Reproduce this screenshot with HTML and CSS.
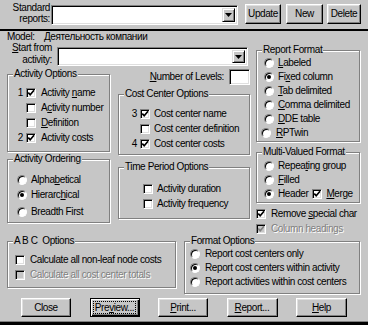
FILE: index.html
```html
<!DOCTYPE html>
<html>
<head>
<meta charset="utf-8">
<link rel="stylesheet" href="styles.css">
</head>
<body>
<div class="top">
  <div class="std-label">Standard<br>reports:</div>
  <div class="combo sunken combo-std">
    <div class="drop"><svg width="7" height="4" viewBox="0 0 7 4"><polygon points="0,0 7,0 3.5,4" fill="#000"/></svg></div>
  </div>
  <button class="btn tbtn b-update">Update</button>
  <button class="btn tbtn b-new">New</button>
  <button class="btn tbtn b-delete">Delete</button>
</div>
<div class="sep"></div>
<div class="main">
  <div class="model"><span class="model-label">Model:</span><span>Деятельность компании</span></div>
  <div class="content">
    <div class="leftpart">
      <div class="start">
        <div class="start-label"><u>S</u>tart from<br>activity:</div>
        <div class="combo sunken combo-start">
          <div class="drop"><svg width="7" height="4" viewBox="0 0 7 4"><polygon points="0,0 7,0 3.5,4" fill="#000"/></svg></div>
        </div>
      </div>
      <div class="cols">
        <div class="col-left">
          <div class="group g-actopt">
            <div class="gt">Activity Options</div>
            <div class="rows rows-actopt">
              <div class="opt"><span class="num">1</span><span class="cb sunken"><svg width="8" height="8" viewBox="0 0 8 8"><path d="M1.2 3.6l2 2.1 3.8-4.4" fill="none" stroke="#000" stroke-width="1.7"/></svg></span><span class="lbl">Activity <u>n</u>ame</span></div>
              <div class="opt"><span class="num"></span><span class="cb sunken"></span><span class="lbl">A<u>c</u>tivity number</span></div>
              <div class="opt"><span class="num"></span><span class="cb sunken"></span><span class="lbl"><u>D</u>efinition</span></div>
              <div class="opt"><span class="num">2</span><span class="cb sunken"><svg width="8" height="8" viewBox="0 0 8 8"><path d="M1.2 3.6l2 2.1 3.8-4.4" fill="none" stroke="#000" stroke-width="1.7"/></svg></span><span class="lbl">Activity costs</span></div>
            </div>
          </div>
          <div class="group g-actord">
            <div class="gt">Activity Ordering</div>
            <div class="rows rows-ord">
              <div class="opt"><span class="rb"></span><span class="lbl">Alpha<u>b</u>etical</span></div>
              <div class="opt"><span class="rb on"></span><span class="lbl">Hierarc<u>h</u>ical</span></div>
              <div class="opt"><span class="rb"></span><span class="lbl">Breadth First</span></div>
            </div>
          </div>
        </div>
        <div class="col-mid">
          <div class="levels"><span><u>N</u>umber of Levels:</span><span class="edit sunken"></span></div>
          <div class="group g-cost">
            <div class="gt">Cost Center Options</div>
            <div class="rows rows-cost">
              <div class="opt"><span class="num">3</span><span class="cb sunken"><svg width="8" height="8" viewBox="0 0 8 8"><path d="M1.2 3.6l2 2.1 3.8-4.4" fill="none" stroke="#000" stroke-width="1.7"/></svg></span><span class="lbl">Cost center name</span></div>
              <div class="opt"><span class="num"></span><span class="cb sunken"></span><span class="lbl">Cost center definition</span></div>
              <div class="opt"><span class="num">4</span><span class="cb sunken"><svg width="8" height="8" viewBox="0 0 8 8"><path d="M1.2 3.6l2 2.1 3.8-4.4" fill="none" stroke="#000" stroke-width="1.7"/></svg></span><span class="lbl">Cost center costs</span></div>
            </div>
          </div>
          <div class="group g-time">
            <div class="gt">Time Period Options</div>
            <div class="rows rows-time">
              <div class="opt"><span class="cb sunken"></span><span class="lbl">Activity duration</span></div>
              <div class="opt"><span class="cb sunken"></span><span class="lbl">Activity frequency</span></div>
            </div>
          </div>
        </div>
      </div>
    </div>
    <div class="col-right">
      <div class="group g-rf">
        <div class="gt">Report Format</div>
        <div class="rows rows-rf">
          <div class="opt"><span class="rb"></span><span class="lbl"><u>L</u>abeled</span></div>
          <div class="opt"><span class="rb on"></span><span class="lbl">Fi<u>x</u>ed column</span></div>
          <div class="opt"><span class="rb"></span><span class="lbl"><u>T</u>ab delimited</span></div>
          <div class="opt"><span class="rb"></span><span class="lbl"><u>C</u>omma delimited</span></div>
          <div class="opt"><span class="rb"></span><span class="lbl"><u>D</u>DE table</span></div>
          <div class="opt shift"><span class="rb"></span><span class="lbl"><u>R</u>PTwin</span></div>
        </div>
      </div>
      <div class="group g-mv">
        <div class="gt">Multi-Valued Format</div>
        <div class="rows rows-mv">
          <div class="opt"><span class="rb"></span><span class="lbl">Repea<u>t</u>ing group</span></div>
          <div class="opt"><span class="rb"></span><span class="lbl"><u>F</u>illed</span></div>
          <div class="opt"><span class="rb on"></span><span class="lbl">Header</span><span class="cb sunken merge-cb"><svg width="8" height="8" viewBox="0 0 8 8"><path d="M1.2 3.6l2 2.1 3.8-4.4" fill="none" stroke="#000" stroke-width="1.7"/></svg></span><span class="lbl"><u>M</u>erge</span></div>
        </div>
      </div>
      <div class="opt row14 row-remove"><span class="cb sunken"><svg width="8" height="8" viewBox="0 0 8 8"><path d="M1.2 3.6l2 2.1 3.8-4.4" fill="none" stroke="#000" stroke-width="1.7"/></svg></span><span class="lbl">Remove <u>s</u>pecial char</span></div>
      <div class="opt row14 row-colh"><span class="cb sunken dis"><svg width="8" height="8" viewBox="0 0 8 8"><path d="M1.2 3.6l2 2.1 3.8-4.4" fill="none" stroke="#808080" stroke-width="1.7"/></svg></span><span class="lbl distext">Column headings</span></div>
    </div>
  </div>
  <div class="bottom">
    <div class="group g-abc">
      <div class="gt">A B C&nbsp; Options</div>
      <div class="rows rows-abc">
        <div class="opt"><span class="cb sunken"></span><span class="lbl">Calculate all non-leaf node costs</span></div>
        <div class="opt"><span class="cb sunken dis"></span><span class="lbl distext">Calculate all cost center totals</span></div>
      </div>
    </div>
    <div class="group g-fmt">
      <div class="gt">Format Options</div>
      <div class="rows rows-fmt">
        <div class="opt"><span class="rb"></span><span class="lbl">Report cost centers only</span></div>
        <div class="opt"><span class="rb on"></span><span class="lbl">Report cost centers within activity</span></div>
        <div class="opt"><span class="rb"></span><span class="lbl">Report activities within cost centers</span></div>
      </div>
    </div>
  </div>
  <div class="buttons">
    <button class="btn">Close</button>
    <button class="btn default"><span class="focus">Pre<u>v</u>iew...</span></button>
    <button class="btn"><u>P</u>rint...</button>
    <button class="btn w51"><u>R</u>eport...</button>
    <button class="btn w51"><u>H</u>elp</button>
  </div>
</div>
<div class="edge"></div>
</body>
</html>
```
FILE: styles.css
```css
* { box-sizing: border-box; }

body {
  margin: 0;
  width: 368px;
  height: 325px;
  background: #c6c6c6;
  font-family: "Liberation Sans", Arial, sans-serif;
  font-size: 10px;
  line-height: 12px;
  letter-spacing: -0.4px;
  color: #000;
  overflow: hidden;
  display: flex;
  flex-direction: column;
}

u { text-decoration: underline; text-underline-offset: 1px; }

.sunken {
  border: 1px solid;
  border-color: #808080 #fff #fff #808080;
  box-shadow: inset 1px 1px 0 #000, inset -1px -1px 0 #dfdfdf;
  background: #fff;
}

.btn {
  font: inherit;
  letter-spacing: inherit;
  color: #000;
  background: #c6c6c6;
  padding: 0;
  margin: 0;
  border: 1px solid;
  border-color: #fff #000 #000 #fff;
  box-shadow: inset -1px -1px 0 #808080, inset 1px 1px 0 #dfdfdf;
  height: 19px;
  width: 50px;
  display: flex;
  align-items: center;
  justify-content: center;
}

.btn.default {
  border: 1px solid #000;
  box-shadow: inset 1px 1px 0 #fff, inset -1px -1px 0 #000, inset -2px -2px 0 #808080;
}

.focus {
  outline: 1px dotted #000;
  outline-offset: 0;
  padding: 0 1px;
  line-height: 11px;
}

.w51 { width: 51px; }

/* top bar */
.top {
  flex: none;
  display: flex;
  align-items: flex-start;
  height: 29px;
  padding-top: 4px;
}

.std-label {
  width: 50px;
  text-align: right;
  line-height: 11px;
  margin-top: -2px;
}

.combo {
  display: flex;
  justify-content: flex-end;
  padding: 2px;
}

.combo-std {
  width: 187px;
  height: 20px;
  margin: 1px 0 0 1px;
}

.drop {
  width: 13px;
  height: 100%;
  background: #c6c6c6;
  border: 1px solid;
  border-color: #dfdfdf #000 #000 #dfdfdf;
  box-shadow: inset 1px 1px 0 #fff, inset -1px -1px 0 #808080;
  display: flex;
  align-items: center;
  justify-content: center;
}

.tbtn { height: 20px; }
.b-update { width: 36px; margin-left: 7px; }
.b-new { width: 37px; margin-left: 5px; }
.b-delete { width: 34px; margin-left: 4px; }

.sep {
  flex: none;
  height: 2px;
  background: #000;
}

/* main */
.main {
  flex: none;
  padding: 0 8px 0 7px;
}

.model {
  display: flex;
  height: 11px;
  line-height: 11px;
}

.model-label { width: 37px; }

.content {
  display: flex;
  gap: 6px;
  align-items: flex-start;
}

.leftpart { width: 243px; }

.start {
  display: flex;
  height: 24px;
}

.start-label {
  width: 45px;
  text-align: right;
  line-height: 12px;
}

.combo-start {
  width: 191px;
  height: 19px;
  margin: 5px 0 0 5px;
}

.cols {
  display: flex;
  gap: 8px;
  align-items: flex-start;
}

.col-left { width: 103px; }
.col-mid { width: 132px; }
.col-right { width: 104px; }

/* group boxes */
.group {
  border: 1px solid #808080;
  box-shadow: inset 1px 1px 0 #fff, 1px 1px 0 #fff;
}

.gt {
  display: table;
  margin: -7px 0 0 5px;
  padding: 0 1px;
  line-height: 12px;
  background: #c6c6c6;
  white-space: nowrap;
}

.g-actopt { margin-top: 8px; height: 78px; }
.g-actord { margin-top: 7px; height: 64px; }

.levels {
  display: flex;
  justify-content: flex-end;
  align-items: center;
  margin-top: 3px;
  height: 16px;
}

.edit {
  width: 21px;
  height: 16px;
  margin-left: 5px;
}

.g-cost { margin-top: 9px; height: 61px; }
.g-time { margin-top: 12px; height: 52px; }
.g-rf { margin-top: 8px; height: 92px; }
.g-mv { margin-top: 10px; height: 51px; }

.bottom {
  display: flex;
  gap: 8px;
  margin-top: 5px;
  align-items: flex-start;
}

.g-abc { width: 169px; height: 47px; }
.g-fmt { width: 176px; height: 53px; }

.buttons {
  display: flex;
  justify-content: space-between;
  width: 326px;
  margin: 4px 0 0 14px;
}

.edge {
  margin-top: auto;
  flex: none;
  height: 4px;
  border-top: 1px solid #808080;
  background: #000;
}

/* rows, checkboxes and radios */
.rows {
  display: flex;
  flex-direction: column;
}

.opt {
  display: flex;
  align-items: center;
  height: 15px;
  white-space: nowrap;
}

.row14 { height: 14px; }

.num {
  text-align: right;
  margin-right: 3px;
}

.cb {
  flex: none;
  width: 10px;
  height: 10px;
  display: flex;
  align-items: center;
  justify-content: center;
}

.cb.dis { background: #c6c6c6; }

.rb {
  flex: none;
  width: 10px;
  height: 10px;
  border-radius: 50%;
  border: 1px solid;
  border-color: #808080 #fff #fff #808080;
  background: #fff;
  box-shadow: inset 1px 1px 0 #000;
  display: flex;
  align-items: center;
  justify-content: center;
}

.rb.on::after {
  content: "";
  width: 4px;
  height: 4px;
  border-radius: 50%;
  background: #000;
}

.lbl { margin-left: 5px; }

.distext {
  color: #808080;
  text-shadow: 1px 1px 0 #fff;
}

.rows-actopt { padding-top: 5px; }
.rows-actopt .num { width: 15px; }

.rows-ord { padding: 7px 0 0 9px; }
.rows-ord .lbl { margin-left: 4px; }
.rows-ord .opt:last-child { margin-top: 2px; }

.rows-cost { padding-top: 6px; }
.rows-cost .num { width: 18px; }
.rows-cost .lbl { margin-left: 4px; }

.rows-time { padding: 8px 0 0 24px; }
.rows-time .lbl { margin-left: 4px; }

.rows-rf { padding-left: 7px; }
.rows-rf .opt { height: 14px; }
.rows-rf .lbl { margin-left: 4px; }
.rows-rf .shift { margin-left: -3px; }
.rows-rf .shift .lbl { margin-left: 5px; }

.rows-mv { padding: 1px 0 0 7px; }
.rows-mv .opt { height: 14px; }
.rows-mv .lbl { margin-left: 4px; }
.merge-cb { margin-left: 4px; }

.row-remove { margin-top: 4px; }
.row-colh { margin-top: 1px; }

.rows-abc { padding: 5px 0 0 7px; }

.rows-fmt { padding-left: 5px; }
.rows-fmt .opt { height: 14px; }
```
